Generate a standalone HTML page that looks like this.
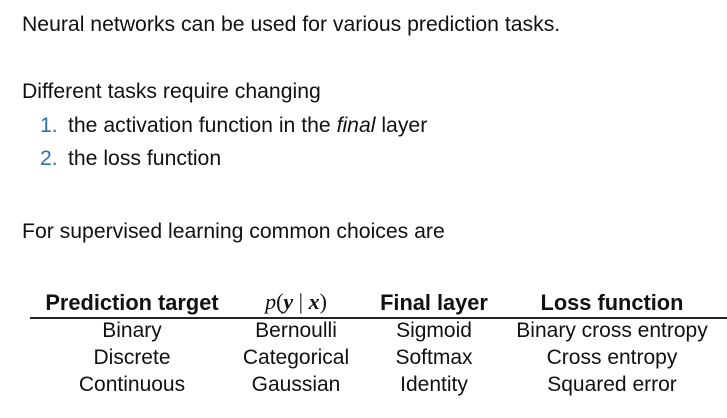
<!DOCTYPE html>
<html><head><meta charset="utf-8"><style>
body{margin:0;width:727px;height:418px;background:#fff;position:relative;overflow:hidden;font-family:"Liberation Sans",sans-serif;color:#111;}
.t{position:absolute;font-size:21.2px;line-height:24px;white-space:nowrap;}
.n{color:#2f6fb0;}
.c{position:absolute;font-size:21px;line-height:24px;white-space:nowrap;transform:translateX(-50%);}
.b{font-weight:bold;font-size:21.8px;}
.m{font-family:"Liberation Serif",serif;font-size:22px;}
</style></head><body>
<div class="t" style="left:22px;top:13px">Neural networks can be used for various prediction tasks.</div>
<div class="t" style="left:22px;top:80px">Different tasks require changing</div>
<div class="t n" style="left:40px;top:114px">1.</div>
<div class="t" style="left:68px;top:114px">the activation function in the <i>final</i> layer</div>
<div class="t n" style="left:40px;top:147px">2.</div>
<div class="t" style="left:68px;top:147px">the loss function</div>
<div class="t" style="left:22px;top:220px">For supervised learning common choices are</div>

<div class="c b" style="left:132px;top:291px">Prediction target</div>
<div class="c m" style="left:296px;top:290px"><i>p</i>(<b><i>y</i></b> | <b><i>x</i></b>)</div>
<div class="c b" style="left:434px;top:291px">Final layer</div>
<div class="c b" style="left:612px;top:291px">Loss function</div>
<div style="position:absolute;left:30px;top:317px;width:697px;height:1.5px;background:#222"></div>

<div class="c" style="left:132px;top:319px">Binary</div>
<div class="c" style="left:296px;top:319px">Bernoulli</div>
<div class="c" style="left:434px;top:319px">Sigmoid</div>
<div class="c" style="left:612px;top:319px">Binary cross entropy</div>

<div class="c" style="left:132px;top:346px">Discrete</div>
<div class="c" style="left:296px;top:346px">Categorical</div>
<div class="c" style="left:434px;top:346px">Softmax</div>
<div class="c" style="left:612px;top:346px">Cross entropy</div>

<div class="c" style="left:132px;top:373px">Continuous</div>
<div class="c" style="left:296px;top:373px">Gaussian</div>
<div class="c" style="left:434px;top:373px">Identity</div>
<div class="c" style="left:612px;top:373px">Squared error</div>
</body></html>
